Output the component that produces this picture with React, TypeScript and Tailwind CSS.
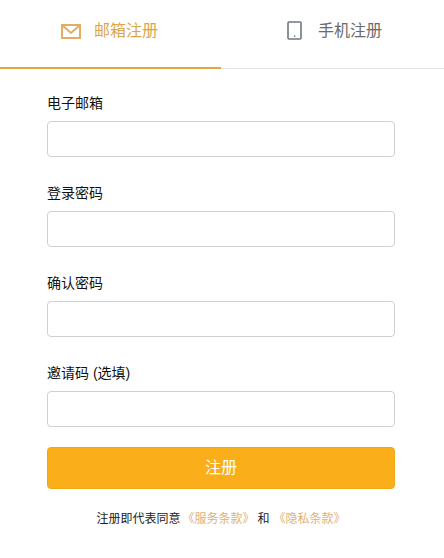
import React from "react";

const font = { fontFamily: '"Liberation Sans", "Noto Sans CJK SC", sans-serif' };

function Field({ label }: { label: string }) {
  return (
    <div className="h-[90px] flex flex-col">
      <label className="h-[36px] pb-[1px] flex items-center text-[14px] leading-[18px] text-[#111]">{label}</label>
      <input className="h-[36px] w-full rounded-[4px] border border-[#d0d0d0] bg-white outline-none" />
    </div>
  );
}

export default function App() {
  return (
    <div style={font} className="w-[444px] h-[558px] bg-white overflow-hidden relative flex flex-col">
      <div className="h-[69px] flex border-b border-[#e2e2e2] shrink-0">
        <div className="w-[221px] h-[69px] border-b-2 border-[#e0a63f] flex items-center pl-[61px] pb-[5px] gap-[13px] text-[#dca646]">
          <svg width="20" height="15" viewBox="0 0 20 15" fill="none" stroke="#e2ae63" strokeWidth="2">
            <rect x="1" y="1" width="18" height="13" />
            <path d="M1.5 1.5 L10 9 L18.5 1.5" />
          </svg>
          <span className="text-[16px]">邮箱注册</span>
        </div>
        <div className="flex-1 flex items-center pl-[66px] pb-[7px] gap-[16px] text-[#6b6b6b]">
          <svg width="15" height="19" viewBox="0 0 15 19" fill="none">
            <rect x="1" y="1" width="13" height="17" rx="1" stroke="#6f7780" strokeWidth="1.6" />
            <rect x="7" y="14.5" width="1.4" height="1.4" fill="#6f7780" />
          </svg>
          <span className="text-[16px]">手机注册</span>
        </div>
      </div>
      <div className="pl-[47px] pr-[49px] pt-[16px] flex flex-col">
        <Field label="电子邮箱" />
        <Field label="登录密码" />
        <Field label="确认密码" />
        <Field label="邀请码 (选填)" />
        <button className="mt-[2px] h-[42px] rounded-[4px] bg-[#faae19] border border-[#f0a818] text-white text-[16px]">注册</button>
        <div className="mt-[21px] flex justify-center items-center text-[12px] leading-[18px] text-[#222]">
          <span>注册即代表同意</span>
          <span className="text-[#dfb074] ml-[2px]">《服务条款》</span>
          <span className="mx-[3px]">和</span>
          <span className="text-[#dfb074] ml-[1px]">《隐私条款》</span>
        </div>
      </div>
    </div>
  );
}
